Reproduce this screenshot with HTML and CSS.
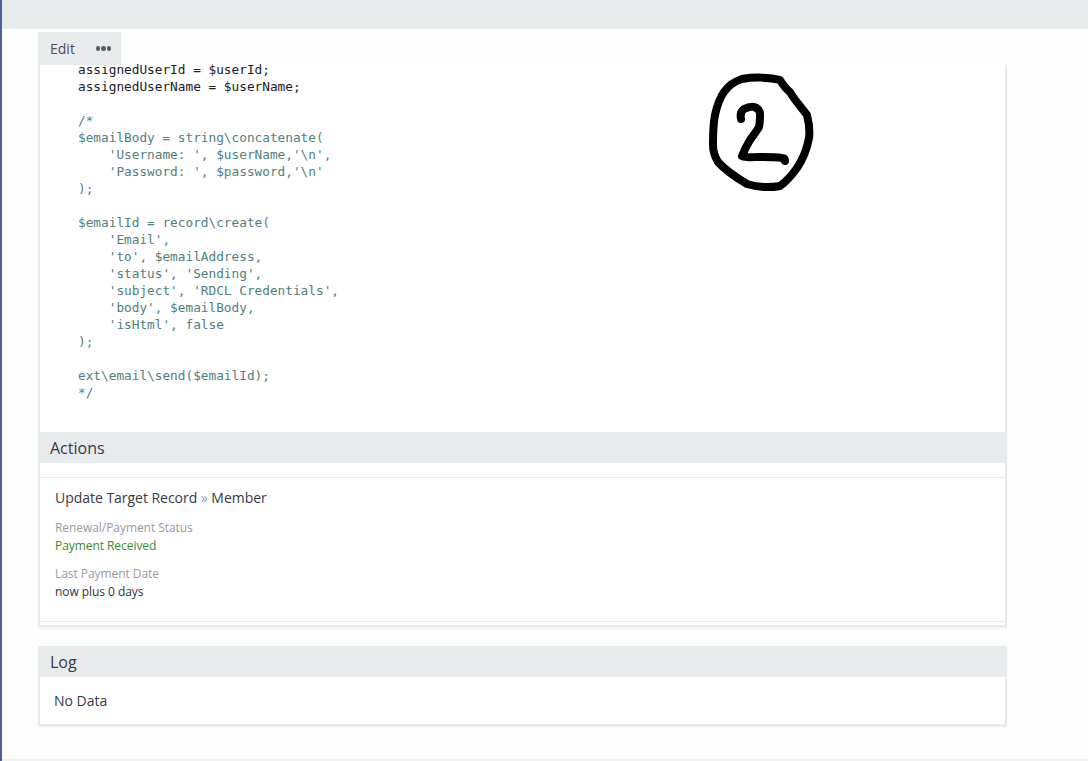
FILE: index.html
```html
<!DOCTYPE html>
<html lang="en">
<head>
<meta charset="utf-8">
<title>Workflow</title>
<link rel="stylesheet" href="styles.css">
</head>
<body>
<div class="stripe"></div>
<div class="page">
  <header class="topbar"></header>
  <main class="content">
    <div class="toolbar">
      <span class="edit">Edit</span>
      <span class="dots" aria-label="More"><i></i><i></i><i></i></span>
    </div>
    <section class="panel main-panel">
      <pre class="code"><span class="dark">assignedUserId = $userId;
assignedUserName = $userName;</span>

/*
$emailBody = string\concatenate(
    'Username: ', $userName,'\n',
    'Password: ', $password,'\n'
);

$emailId = record\create(
    'Email',
    'to', $emailAddress,
    'status', 'Sending',
    'subject', 'RDCL Credentials',
    'body', $emailBody,
    'isHtml', false
);

ext\email\send($emailId);
*/</pre>
      <h2 class="panel-head">Actions</h2>
      <div class="action-list">
        <div class="action">
          <div class="action-title">Update Target Record <span class="sep">»</span> Member</div>
          <div class="field">
            <div class="label">Renewal/Payment Status</div>
            <div class="value green">Payment Received</div>
          </div>
          <div class="field">
            <div class="label">Last Payment Date</div>
            <div class="value">now plus 0 days</div>
          </div>
        </div>
      </div>
    </section>
    <section class="panel log-panel">
      <h2 class="panel-head log-head">Log</h2>
      <div class="no-data">No Data</div>
    </section>
  </main>
  <svg class="scribble" width="110" height="122" viewBox="0 0 110 122" fill="none" stroke="#000" stroke-width="8" stroke-linecap="round" stroke-linejoin="round">
    <path d="M35 8 C46 6 62 6 73 9 C76 14 79 18 83 21 C86 27 94 36 100 44 C102 52 103 60 102 67 C100 78 96 88 90 97 C85 104 80 110 73 115 C62 117 50 116 40 113 C30 107 19 100 11 91 C8 86 6 80 6 74 C6 64 6 54 8 44 C10 35 12 28 17 21 C22 14 28 10 35 8 Z"/>
    <path d="M34 48 C33 43 34 40 37 38 C41 36 44 35 47 36 C51 37 53 40 53 43 C53 48 53 52 52 56 C49 61 46 65 43 69 C40 74 37 80 35 85 C40 87 46 86 52 86 C60 86 68 86 75 87 C77 87 78 88 78 90"/>
  </svg>
</div>
</body>
</html>
```
FILE: styles.css
```css
* { box-sizing: border-box; }
html, body { margin: 0; height: 100%; }
body {
  display: flex;
  width: 1088px;
  height: 761px;
  overflow: hidden;
  background: #fdfdfd;
  font-family: "Open Sans", sans-serif;
  color: #333;
}
.stripe { flex: 0 0 2px; background: #4a6491; }
.page {
  position: relative;
  flex: 1;
  display: flex;
  flex-direction: column;
  border-bottom: 2px solid #f0f1f2;
}
.topbar { flex: 0 0 29px; background: #e8ebec; }
.content {
  width: 969px;
  margin: 3px 0 0 36px;
  display: flex;
  flex-direction: column;
}
.toolbar {
  position: relative;
  width: 83px;
  height: 33px;
  background: #e8ebec;
  display: flex;
  align-items: center;
  padding-left: 12px;
  gap: 21px;
  font-size: 14px;
  color: #4a4f57;
}
.dots { display: flex; gap: 1px; }
.dots i { width: 4.5px; height: 4.5px; border-radius: 50%; background: #5a5f66; }
.panel {
  background: #fff;
  border: solid #e8ebec;
  border-width: 0 2px 2px;
  box-shadow: 0 1px 1px #f0f1f2;
}
.main-panel { height: 562px; }
.code {
  margin: -4px 0 0;
  height: 371px;
  padding: 0 0 0 38px;
  font-family: "DejaVu Sans Mono", "Liberation Mono", monospace;
  font-size: 12.75px;
  line-height: 17px;
  color: #4f807c;
}
.dark { color: #1c2024; }
.panel-head {
  margin: 0;
  height: 31px;
  background: #e8ebec;
  font-size: 16px;
  font-weight: 400;
  line-height: 33px;
  padding-left: 10px;
  color: #343a46;
}
.log-head { margin: 0 -2px; padding-left: 12px; }
.action-list { margin-top: 14px; border-top: 1px solid #e8ebec; border-bottom: 1px solid #e8ebec; height: 145px; padding: 10px 15px; }
.action-title { font-size: 14px; line-height: 20px; color: #343a46; margin-bottom: 11px; letter-spacing: -0.03px; }
.sep { color: #8a9bb0; }
.field { font-size: 12px; line-height: 18px; margin-bottom: 10px; letter-spacing: -0.06px; }
.label { color: #9a9a9f; }
.value { color: #333; }
.green { color: #3c8a2e; }
.log-panel { margin-top: 19px; height: 80px; }
.no-data { font-size: 14px; line-height: 20px; padding: 14px 14px; color: #343a46; }
.scribble { position: absolute; left: 705px; top: 71px; }
```
